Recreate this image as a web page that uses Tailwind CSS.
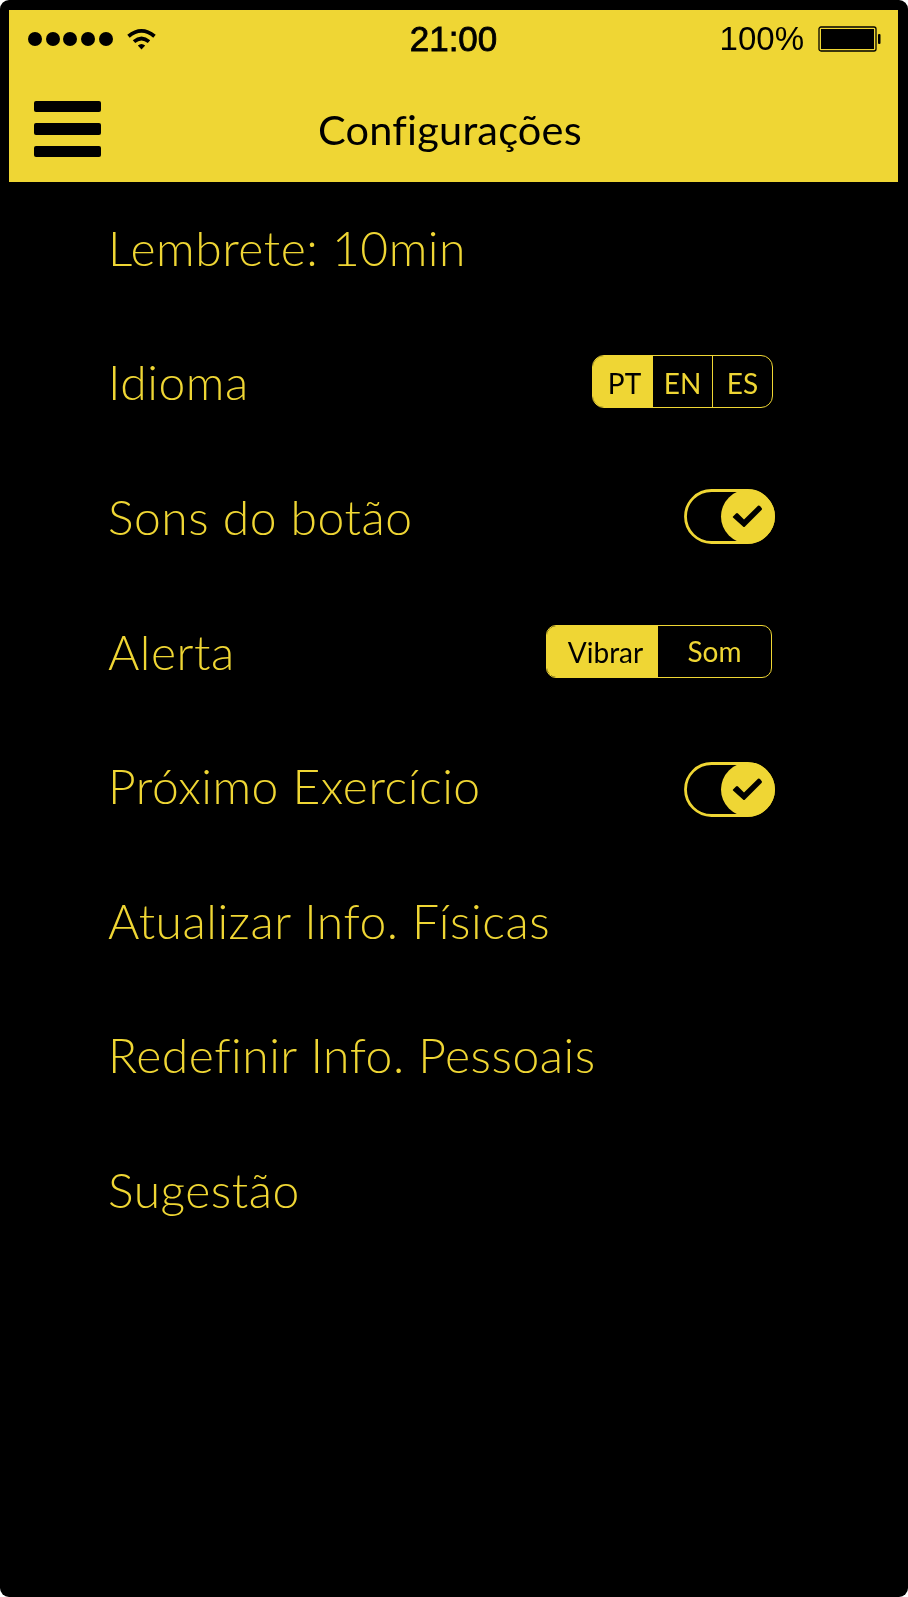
<!DOCTYPE html>
<html lang="pt">
<head>
<meta charset="utf-8">
<title>Configurações</title>
<script src="https://cdn.jsdelivr.net/npm/@tailwindcss/browser@4"></script>
</head>
<body class="bg-white font-['Lato',sans-serif]">
<div class="w-[908px] h-[1597px] bg-black rounded-[9px] overflow-hidden pt-[10px] will-change-transform">
  <header class="ml-[9px] w-[889px] h-[172px] bg-[#efd634] text-black">
    <div class="h-[58px] grid grid-cols-[1fr_auto_1fr] items-center pl-[19px] pr-[17px] font-['Liberation_Sans',sans-serif]">
      <div class="flex items-center gap-[14px]">
        <div class="flex gap-[3.7px]">
          <span class="size-[14px] rounded-full bg-black"></span>
          <span class="size-[14px] rounded-full bg-black"></span>
          <span class="size-[14px] rounded-full bg-black"></span>
          <span class="size-[14px] rounded-full bg-black"></span>
          <span class="size-[14px] rounded-full bg-black"></span>
        </div>
        <svg class="w-[29px] h-[22px]" viewBox="0 0 29 22" fill="none" stroke="#000" stroke-width="3.8">
          <path d="M1.500 8.200Q14.500 -2.500 27.500 8.200M7 13.600Q14.500 7.400 22 13.600"/>
          <path d="M10.800 17.500Q14.500 14.500 18.200 17.500L14.500 21.500Z" fill="#000" stroke="none"/>
        </svg>
      </div>
      <div class="text-[35px] leading-none pr-[2px] pb-[2px] [-webkit-text-stroke:0.8px_black]">21:00</div>
      <div class="flex items-center justify-end gap-[14px]">
        <div class="text-[33px] leading-none pb-[2px]">100%</div>
        <svg class="w-[63px] h-[26px]" viewBox="0 0 63 26">
          <rect x="1" y="1" width="57" height="24" rx="2" fill="none" stroke="#000" stroke-width="1.300"/>
          <rect x="3" y="3" width="53" height="20" fill="#000"/>
          <rect x="60" y="8" width="2.500" height="10" rx="1"/>
        </svg>
      </div>
    </div>
    <div class="h-[114px] grid grid-cols-[1fr_auto_1fr] items-center pl-[25px] pr-[32px]">
      <div class="flex flex-col gap-[11px] w-[67px] pt-[8px]">
        <span class="h-[11.300px] rounded-[2px] bg-black"></span>
        <span class="h-[11.300px] rounded-[2px] bg-black"></span>
        <span class="h-[11.300px] rounded-[2px] bg-black"></span>
      </div>
      <h1 class="text-[41.500px] leading-none tracking-[0.2px] pt-[9px]">Configurações</h1>
    </div>
  </header>

  <main class="pl-[108px] text-[#efd634] text-[48px] leading-none font-light tracking-[0.53px]">
    <div class="h-[134.6px] pb-[3px] flex items-center">Lembrete: 10min</div>
    <div class="h-[134.6px] pb-[3px] pr-[135px] flex items-center justify-between">
      <span>Idioma</span>
      <div class="flex w-[181px] h-[53px] -mt-px rounded-[12px] border-[1.500px] border-[#efd634] overflow-hidden text-[28px] font-normal tracking-normal">
        <span class="w-[60px] bg-[#efd634] text-black flex items-center justify-center pl-[3px] pt-[3px]">PT</span>
        <span class="w-[60px] border-r border-[#efd634] flex items-center justify-center pt-[3px]">EN</span>
        <span class="flex-1 flex items-center justify-center pt-[3px]">ES</span>
      </div>
    </div>
    <div class="h-[134.6px] pb-[3px] pr-[133px] flex items-center justify-between">
      <span>Sons do botão</span>
      <svg class="w-[91px] h-[55px]" viewBox="0 0 91 55">
        <rect x="1.500" y="1.500" width="88" height="52" rx="26" fill="none" stroke="#efd634" stroke-width="2.800"/>
        <circle cx="64" cy="27.500" r="27" fill="#efd634"/>
        <path d="M49 27.500L52 24.500Q53 23.500 54 24.500L60 30.500L74 16.800Q75 16 76 17L77.600 19Q78.500 20 77.500 21L61 37.500Q60 38.500 59 37.500L49 28.500Q48.500 28 49 27.500Z" fill="#000"/>
      </svg>
    </div>
    <div class="h-[134.6px] pb-[3px] pr-[136px] flex items-center justify-between">
      <span>Alerta</span>
      <div class="flex w-[226px] h-[53px] -mt-px rounded-[10px] border-[1.500px] border-[#efd634] overflow-hidden text-[28px] font-normal tracking-normal">
        <span class="w-[111px] bg-[#efd634] text-black flex items-center justify-center pl-[6px] pt-[2px]">Vibrar</span>
        <span class="flex-1 flex items-center justify-center">Som</span>
      </div>
    </div>
    <div class="h-[134.6px] pb-[3px] pr-[133px] flex items-center justify-between">
      <span>Próximo Exercício</span>
      <svg class="w-[91px] h-[55px] mt-[7px]" viewBox="0 0 91 55">
        <rect x="1.500" y="1.500" width="88" height="52" rx="26" fill="none" stroke="#efd634" stroke-width="2.800"/>
        <circle cx="64" cy="27.500" r="27" fill="#efd634"/>
        <path d="M49 27.500L52 24.500Q53 23.500 54 24.500L60 30.500L74 16.800Q75 16 76 17L77.600 19Q78.500 20 77.500 21L61 37.500Q60 38.500 59 37.500L49 28.500Q48.500 28 49 27.500Z" fill="#000"/>
      </svg>
    </div>
    <div class="h-[134.6px] pb-[3px] flex items-center">Atualizar Info. Físicas</div>
    <div class="h-[134.6px] pb-[3px] flex items-center">Redefinir Info. Pessoais</div>
    <div class="h-[134.6px] pb-[3px] flex items-center">Sugestão</div>
  </main>
</div>
</body>
</html>
